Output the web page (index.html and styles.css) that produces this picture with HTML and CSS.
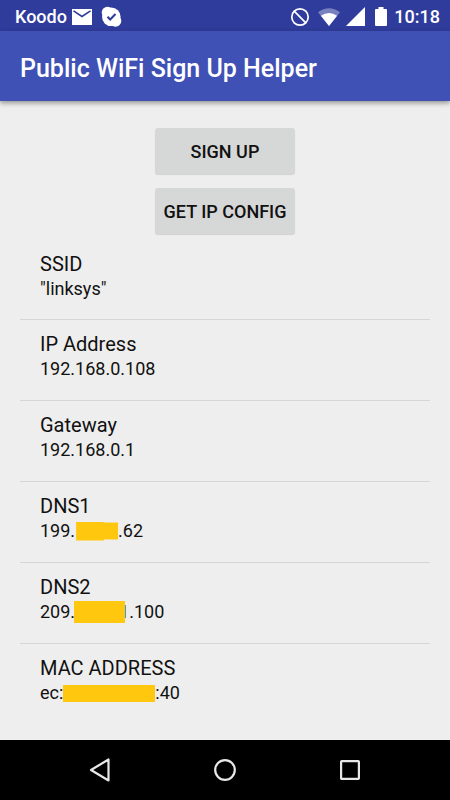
FILE: index.html
```html
<!DOCTYPE html>
<html lang="en">
<head>
<meta charset="utf-8">
<meta name="viewport" content="width=device-width, initial-scale=1">
<title>Public WiFi Sign Up Helper</title>
<link rel="stylesheet" href="styles.css">
</head>
<body>
<div class="status-bar">
  <span class="carrier">Koodo</span>
  <svg class="mail" width="20" height="16" viewBox="0 0 20 16" aria-hidden="true"><path fill="#fff" d="M0 0h20v16H0z"/><path fill="none" stroke="#303c9c" stroke-width="1.600" d="M1.500 1.800 10 7.500l8.500-5.700"/></svg>
  <svg class="chat" width="21" height="22" viewBox="0 0 21 22" aria-hidden="true"><circle cx="10.300" cy="10.800" r="9.300" fill="#fff"/><circle cx="6.500" cy="6.500" r="5.800" fill="#fff"/><circle cx="14.500" cy="15" r="5.800" fill="#fff"/><path fill="none" stroke="#303c9c" stroke-width="2" d="m6.500 10.800 2.700 2.700 5.300-5.500"/></svg>
  <svg class="blocked" width="20" height="20" viewBox="0 0 20 20" aria-hidden="true"><g fill="none" stroke="#fff" stroke-width="1.700"><circle cx="10" cy="10" r="8.200"/><path d="m4.200 4.200 11.600 11.600"/></g></svg>
  <svg class="wifi" width="22" height="18" viewBox="0 0 22 18" aria-hidden="true"><path fill="#fff" fill-opacity=".35" d="M0 4.200Q11-3.600 22 4.200L11 18z"/><path fill="#fff" d="M2.900 7.800Q11 2.400 19.100 7.800L11 18z"/></svg>
  <svg class="signal" width="19" height="19" viewBox="0 0 19 19" aria-hidden="true"><path fill="#fff" d="M19 0v19H0z"/></svg>
  <svg class="battery" width="12" height="19" viewBox="0 0 12 19" aria-hidden="true"><path fill="#fff" d="M3.500 0h5v2H11q1 0 1 1v15q0 1-1 1H1q-1 0-1-1V3q0-1 1-1h2.500z"/></svg>
  <time class="clock">10:18</time>
</div>
<header class="app-bar"><h1>Public WiFi Sign Up Helper</h1></header>
<main>
  <div class="actions">
    <button type="button">SIGN UP</button>
    <button type="button">GET IP CONFIG</button>
  </div>
  <dl class="details">
    <div class="row"><dt>SSID</dt><dd>"linksys"</dd></div>
    <div class="row"><dt>IP Address</dt><dd>192.168.0.108</dd></div>
    <div class="row"><dt>Gateway</dt><dd>192.168.0.1</dd></div>
    <div class="row"><dt>DNS1</dt><dd>199.<span class="mask mask-short"></span>.62</dd></div>
    <div class="row"><dt>DNS2</dt><dd>209.<span class="mask mask-medium"></span>1.100</dd></div>
    <div class="row"><dt>MAC ADDRESS</dt><dd>ec:<span class="mask mask-long"></span>:40</dd></div>
  </dl>
</main>
<nav class="nav-bar">
  <button type="button" aria-label="Back"><svg width="24" height="26" viewBox="0 0 24 26"><path fill="none" stroke="#e8e8e8" stroke-width="2.200" stroke-linejoin="round" d="M20.500 2.500v21L3 13z"/></svg></button>
  <button type="button" aria-label="Home"><svg width="24" height="24" viewBox="0 0 24 24"><circle cx="12" cy="12" r="9.800" fill="none" stroke="#e8e8e8" stroke-width="2.200"/></svg></button>
  <button type="button" aria-label="Recent apps"><svg width="24" height="24" viewBox="0 0 24 24"><rect x="3.100" y="3.100" width="17.800" height="17.800" rx=".6" fill="none" stroke="#e8e8e8" stroke-width="2.200"/></svg></button>
</nav>
</body>
</html>
```
FILE: styles.css
```css
* {
  box-sizing: border-box;
}

body {
  margin: 0;
  min-height: 100vh;
  display: flex;
  flex-direction: column;
  background: #eee;
  color: #111;
  font-family: Roboto, sans-serif;
}

.status-bar {
  height: 31px;
  display: flex;
  align-items: center;
  padding: 2px 10px 0 15px;
  background: #303c9c;
  color: #fff;
  font-size: 18px;
  font-weight: 500;
}

.status-bar svg {
  flex: none;
}

.mail {
  margin-left: 5px;
}

.chat {
  margin-left: 9px;
}

.blocked {
  margin-left: auto;
}

.wifi {
  margin-left: 8px;
}

.signal {
  margin-left: 6px;
}

.battery {
  margin-left: 10px;
}

.clock {
  margin-left: 7px;
}

.app-bar {
  height: 70px;
  display: flex;
  align-items: center;
  padding: 4px 20px 0;
  background: #3f51b5;
  box-shadow: 0 2px 5px rgba(0, 0, 0, 0.4);
}

h1 {
  margin: 0;
  color: #fff;
  font-size: 25px;
  font-weight: 500;
}

main {
  flex: 1;
  padding: 27px 20px 0;
}

.actions {
  width: max-content;
  margin: 0 auto;
  display: grid;
  gap: 14px;
}

.actions button {
  height: 46px;
  padding: 0 9px;
  border: 0;
  border-radius: 3px;
  background: #d6d7d7;
  box-shadow: 0 1px 1px rgba(0, 0, 0, 0.12);
  color: #111;
  font: 500 18px Roboto, sans-serif;
}

.details {
  margin: 6px 0 0;
}

.row {
  padding: 11px 20px 18px;
}

.row + .row {
  padding-bottom: 19px;
  border-top: 1px solid #d6d6d6;
}

dt {
  font-size: 20px;
  line-height: 26px;
}

dd {
  margin: 0;
  display: flex;
  align-items: center;
  font-size: 18px;
  line-height: 24px;
}

.mask {
  z-index: 1;
  background: #ffc80f;
}

.mask-short {
  width: 42px;
  height: 19px;
  margin-left: 1px;
  clip-path: polygon(0 0, 66% 0, 66% 1px, 100% 1px, 100% 18px, 66% 18px, 66% 100%, 0 100%);
}

.mask-medium {
  width: 51px;
  height: 22px;
  margin: 0 -6px 0 -1px;
}

.mask-long {
  width: 92px;
  height: 17px;
}

.nav-bar {
  height: 60px;
  display: flex;
  justify-content: center;
  gap: 101px;
  background: #000;
}

.nav-bar button {
  padding: 0;
  border: 0;
  background: none;
  display: flex;
  align-items: center;
}
```
